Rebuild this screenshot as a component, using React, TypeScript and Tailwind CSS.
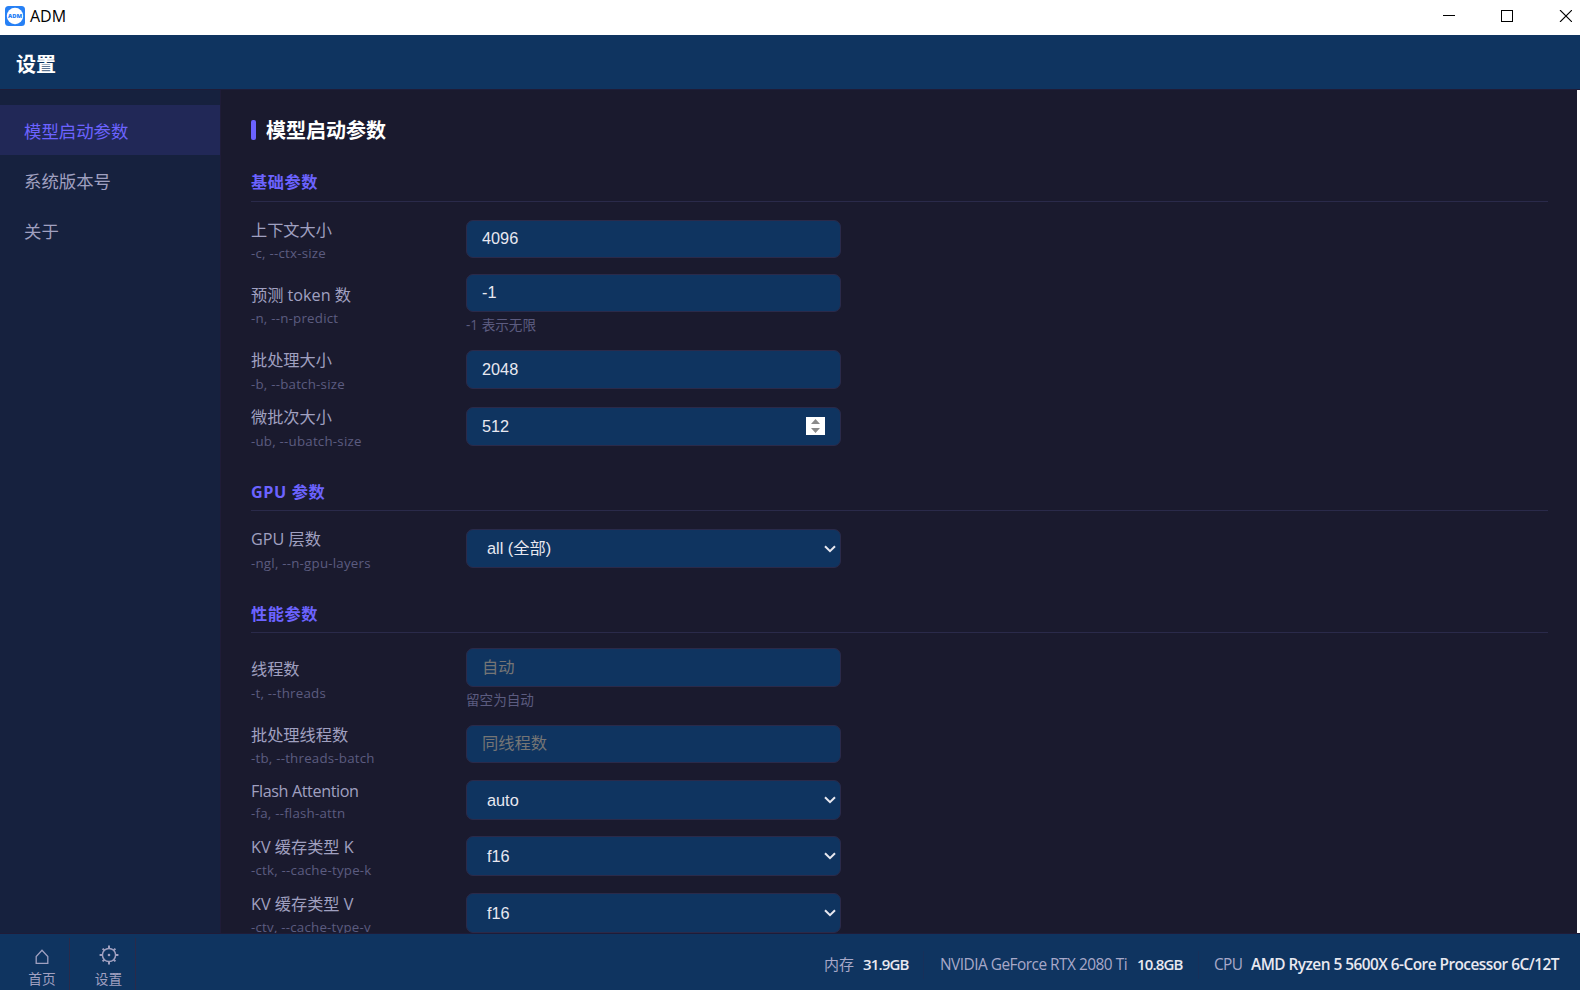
import React from 'react';
import clsx from 'clsx';

interface Param {
  label: string;
  flag: string;
  type: 'number' | 'select';
  value?: string;
  placeholder?: string;
  hint?: string;
  spinner?: boolean;
  rowClass: string;
  labelClass: string;
  flagClass?: string;
  boxClass: string;
}

interface Section {
  title: string;
  headClass: string;
  params: Param[];
}

const navItems = ['模型启动参数', '系统版本号', '关于'];

const sections: Section[] = [
  {
    title: '基础参数',
    headClass: 'h-[32px] mb-[18px]',
    params: [
      { label: '上下文大小', flag: '-c, --ctx-size', type: 'number', value: '4096', rowClass: 'h-[54px]', labelClass: '-mt-0.5', boxClass: 'h-[38px] pb-px' },
      { label: '预测 token 数', flag: '-n, --n-predict', type: 'number', value: '-1', hint: '-1 表示无限', rowClass: 'h-[76px]', labelClass: 'mt-[9px]', boxClass: 'h-[38px] pb-px' },
      { label: '批处理大小', flag: '-b, --batch-size', type: 'number', value: '2048', rowClass: 'h-[57px]', labelClass: '-mt-0.5', flagClass: 'pt-px', boxClass: 'h-[39px]' },
      { label: '微批次大小', flag: '-ub, --ubatch-size', type: 'number', value: '512', spinner: true, rowClass: 'h-[72px]', labelClass: '-mt-0.5', flagClass: 'pt-px', boxClass: 'h-[39px]' },
    ],
  },
  {
    title: 'GPU 参数',
    headClass: 'h-[32px] mb-[18px] pt-px',
    params: [
      { label: 'GPU 层数', flag: '-ngl, --n-gpu-layers', type: 'select', value: 'all (全部)', rowClass: 'h-[72px]', labelClass: '-mt-0.5', flagClass: 'pt-px', boxClass: 'h-[39px]' },
    ],
  },
  {
    title: '性能参数',
    headClass: 'h-[32px] mb-[15px] pt-px',
    params: [
      { label: '线程数', flag: '-t, --threads', type: 'number', placeholder: '自动', hint: '留空为自动', rowClass: 'h-[77px]', labelClass: 'mt-[9px]', flagClass: 'pt-px', boxClass: 'h-[39px]' },
      { label: '批处理线程数', flag: '-tb, --threads-batch', type: 'number', placeholder: '同线程数', rowClass: 'h-[55px]', labelClass: '-mt-0.5', boxClass: 'h-[38px] pb-px' },
      { label: 'Flash Attention', flag: '-fa, --flash-attn', type: 'select', value: 'auto', rowClass: 'h-[56px]', labelClass: '-mt-px tracking-[-0.4px]', flagClass: '-mt-px', boxClass: 'h-[40px]' },
      { label: 'KV 缓存类型 K', flag: '-ctk, --cache-type-k', type: 'select', value: 'f16', rowClass: 'h-[57px]', labelClass: '-mt-px', boxClass: 'h-[40px]' },
      { label: 'KV 缓存类型 V', flag: '-ctv, --cache-type-v', type: 'select', value: 'f16', rowClass: 'h-[57px]', labelClass: '-mt-px', boxClass: 'h-[40px]' },
    ],
  },
];

const TitleBar: React.FC = () => (
  <div className="flex h-[35px] shrink-0 items-center bg-white pl-[5px] pr-2 text-black">
    <svg width="20" height="20" viewBox="0 0 20 20" className="-mt-[3px]">
      <rect width="20" height="20" rx="3.5" fill="#2680f5" />
      <circle cx="10" cy="10" r="8.2" fill="#fff" />
      <text x="10" y="12" textAnchor="middle" fontSize="5.8" fontWeight="800" fontFamily="Open Sans, sans-serif" fill="#2680f5">ADM</text>
    </svg>
    <span className="-mt-[3px] ml-[5px] text-[16px]">ADM</span>
    <svg width="130" height="12" viewBox="0 0 130 12" className="-mt-[3px] ml-auto" fill="none" stroke="#000" shapeRendering="crispEdges">
      <path d="M1 5.5h12" />
      <path d="M59.5 .5h11v11h-11z" />
      <path d="M118 0l12 12M130 0l-12 12" shapeRendering="auto" strokeWidth="1.1" />
    </svg>
  </div>
);

const ParamRow: React.FC<{ param: Param }> = ({ param }) => (
  <div className={clsx('flex shrink-0 items-start', param.rowClass)}>
    <div className={clsx('w-[215px] shrink-0', param.labelClass)}>
      <div className="h-6 text-[16.2px] leading-6 text-[#a0a0c0]">{param.label}</div>
      <div className={clsx('text-[13.3px] leading-[23px] tracking-[0.22px] text-[#5c5c80]', param.flagClass)}>{param.flag}</div>
    </div>
    <div className="w-[375px]">
      <div
        className={clsx(
          'flex items-center rounded-[7px] border border-[#2a2a4a] bg-[#0f3460] font-["Liberation_Sans","Noto_Sans_CJK_SC",sans-serif] text-[16.3px]',
          param.type === 'select' ? 'pl-5 pr-1' : 'px-[15px]',
          param.boxClass,
        )}
      >
        {param.value ? (
          <span className="text-[#e8e8f0]">{param.value}</span>
        ) : (
          <span className="text-[#757575]">{param.placeholder}</span>
        )}
        {param.spinner && (
          <svg width="19" height="18" viewBox="0 0 19 18" className="-mt-px ml-auto">
            <rect width="19" height="18" fill="#fff" />
            <path d="M5 7l4.5-5 4.5 5zM5 11l4.5 5 4.5-5z" fill="#8b8b8b" />
          </svg>
        )}
        {param.type === 'select' && (
          <svg width="12" height="8" viewBox="0 0 12 8" className="ml-auto" fill="none" stroke="#e8e8f0" strokeWidth="2">
            <path d="M1 1.2l5 5 5-5" />
          </svg>
        )}
      </div>
      {param.hint && <div className="mt-[3px] text-[13.6px] leading-5 text-[#5c5c80]">{param.hint}</div>}
    </div>
  </div>
);

const Footer: React.FC = () => (
  <div className="flex h-14 shrink-0 items-stretch bg-[#0f3460] text-[#a0a0c0]">
    <div className="ml-[15px] mt-1 flex w-[55px] flex-col items-center border-r border-[#2a2a4a]">
      <svg width="14" height="16" viewBox="0 0 14 16" className="mt-[11px]" fill="none" stroke="currentColor" strokeWidth="1.3">
        <path d="M1.2 14.3V7.6L7 1.2l5.8 6.4v6.7z" />
      </svg>
      <span className="mt-1 text-[13.7px] leading-5">首页</span>
    </div>
    <div className="mt-1 flex w-[66px] flex-col items-center border-r border-[#2a2a4a] pl-3">
      <svg width="20" height="20" viewBox="0 0 20 20" className="mt-[7px]" fill="none" stroke="currentColor" strokeWidth="1.5">
        <circle cx="10" cy="10" r="6.6" />
        <circle cx="10" cy="10" r="1.3" fill="currentColor" stroke="none" />
        <path d="M10 .6v3M10 16.4v3M.6 10h3M16.4 10h3M3.6 3.6l1.8 1.8M14.6 14.6l1.8 1.8M3.6 16.4l1.8-1.8M14.6 5.4l1.8-1.8" strokeWidth="2" />
      </svg>
      <span className="mt-1 text-[13.7px] leading-5">设置</span>
    </div>
    <div className="ml-auto flex items-center pr-[18px] pt-[5px] text-[15.4px] text-[#a8a8c8]">
      <span className="text-[15px]">内存</span>
      <span className="ml-[9px] w-[46px] whitespace-nowrap text-[15px] font-semibold tracking-[-0.85px] text-[#e8e8f0]">31.9GB</span>
      <span className="ml-[14px] h-7 w-px bg-[#17305a]" />
      <span className="ml-4 w-[188px] whitespace-nowrap tracking-[-0.5px]">NVIDIA GeForce RTX 2080 Ti</span>
      <span className="ml-[9px] w-[46px] whitespace-nowrap text-[15px] font-semibold tracking-[-0.85px] text-[#e8e8f0]">10.8GB</span>
      <span className="ml-[15px] h-7 w-px bg-[#17305a]" />
      <span className="ml-[15px] w-7 whitespace-nowrap tracking-[-0.6px]">CPU</span>
      <span className="ml-[9px] w-[311px] whitespace-nowrap font-semibold tracking-[-0.53px] text-[#e8e8f0]">AMD Ryzen 5 5600X 6-Core Processor 6C/12T</span>
    </div>
  </div>
);

export default function App() {
  return (
    <div className='flex h-[990px] w-[1580px] flex-col overflow-hidden bg-[#1a1a2e] font-["Open_Sans","Noto_Sans_CJK_SC",sans-serif]'>
      <TitleBar />
      <div className="flex h-[55px] shrink-0 items-center border-b border-[#1f1c38] bg-[#0f3460] pl-4">
        <h1 className="mt-1.5 text-[20px] font-bold text-white">设置</h1>
      </div>

      <div className="flex h-[844px] shrink-0 border-b border-[#1f1c38]">
        <nav className="w-[221px] shrink-0 border-r border-[#1f1c38] bg-[#16213e] pt-[15px]">
          {navItems.map((item, i) => (
            <div
              key={item}
              className={clsx(
                'flex h-[50px] items-center pl-6 pt-[3px] text-[17.4px]',
                i === 0 ? 'bg-[#212857] text-[#6c63ff]' : 'text-[#a0a0c0]',
              )}
            >
              {item}
            </div>
          ))}
        </nav>

        <main className="flex min-w-0 flex-1 flex-col overflow-hidden pl-[30px] pr-[29px] pt-[30px]">
          <div className="mb-[30px] flex h-5 shrink-0 items-center">
            <span className="h-5 w-[5px] rounded-[2px] bg-[#6c63ff]" />
            <h2 className="ml-[10px] mt-0.5 text-[20px] font-bold text-white">模型启动参数</h2>
          </div>
          {sections.map((section) => (
            <section key={section.title} className="shrink-0">
              <div className={clsx('border-b border-[#2a2a4a]', section.headClass)}>
                <h3 className="text-[16.2px] font-bold leading-6 tracking-[0.6px] text-[#6c63ff]">{section.title}</h3>
              </div>
              {section.params.map((param) => (
                <ParamRow key={param.label} param={param} />
              ))}
            </section>
          ))}
        </main>
        <div className="w-[3px] shrink-0 bg-white" />
      </div>
      <Footer />
    </div>
  );
}
